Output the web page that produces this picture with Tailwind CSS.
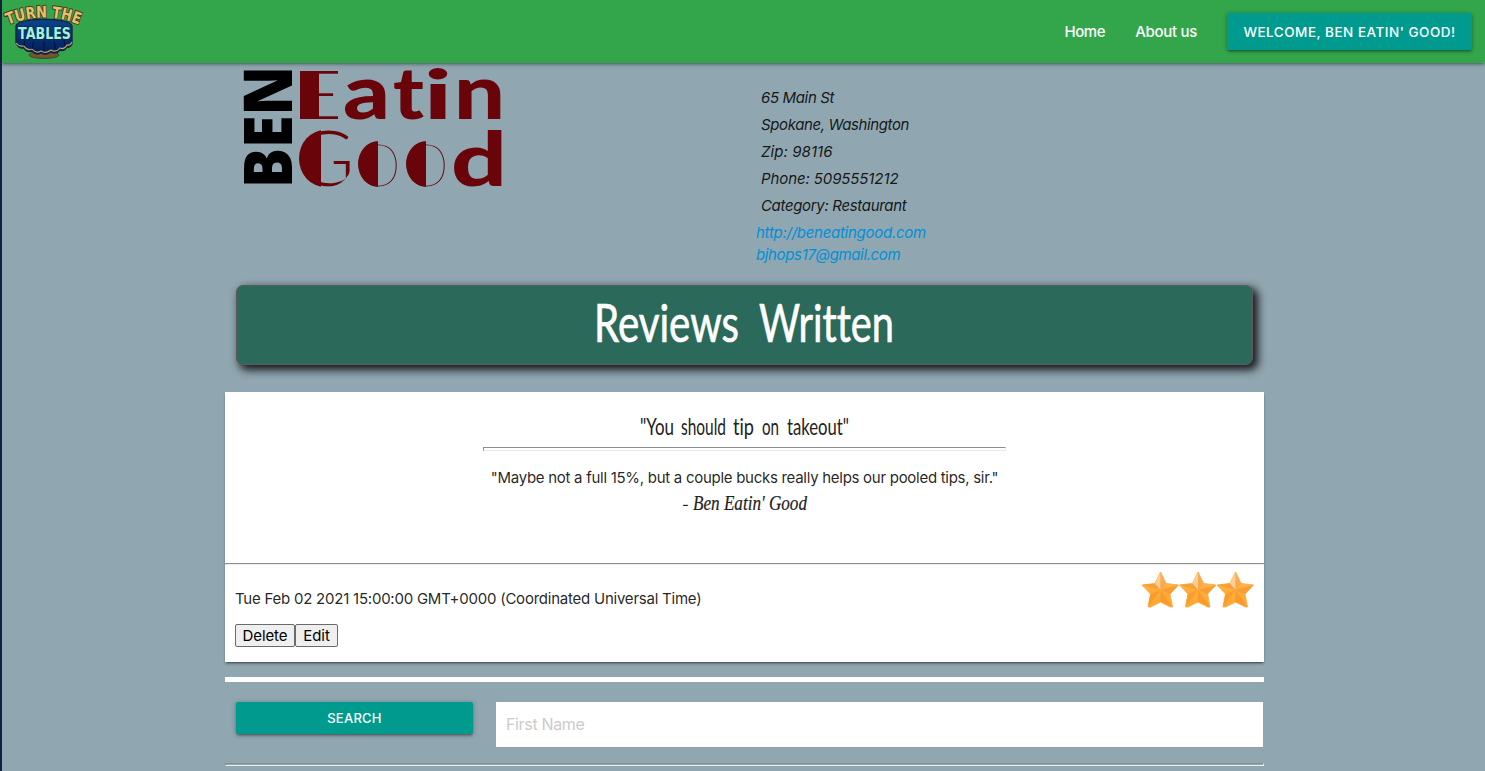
<!DOCTYPE html>
<html lang="en">
<head>
<meta charset="utf-8">
<title>Turn the Tables</title>
<script src="https://cdn.jsdelivr.net/npm/@tailwindcss/browser@4"></script>
</head>
<body class="h-[771px] overflow-hidden border-l-2 border-[#13223c] bg-[#90a6b0] font-['Inter',sans-serif] text-[15px] leading-[22px] text-black/87">
<nav class="relative flex h-[63px] items-center justify-between bg-[#33a64c] pr-[13px] text-white shadow-[0_2px_2px_0_rgba(0,0,0,.14),0_3px_1px_-2px_rgba(0,0,0,.12),0_1px_5px_0_rgba(0,0,0,.2)]">
  <svg class="block h-[63px] w-[84px]" viewBox="2 0 84 63" role="img" aria-label="Turn the Tables">
    <defs>
      <path id="arc" d="M8 25Q44 10 80 25"/>
      <linearGradient id="cloth" x2="0" y2="1"><stop stop-color="#08458d"/><stop offset="1" stop-color="#061c58"/></linearGradient>
    </defs>
    <ellipse cx="44" cy="55" rx="15" ry="3.5" fill="#765432" stroke="#3c4a2c"/>
    <path d="M16 26C17 17 71 17 72 26V44Q70 48 67 47Q64 52 60 50Q56 55 51 52Q46 56 41 53Q36 56 32 51Q27 53 24 48Q19 49 16 43Z" fill="url(#cloth)" stroke="#13263c" stroke-width="1.4"/>
    <path d="M16 43Q19 47 24 46Q27 51 32 49Q36 54 41 51Q46 54 51 50Q56 53 60 48Q64 50 67 45Q70 46 72 42" fill="none" stroke="#b7a16b" stroke-width="1.2"/>
    <path d="M25 40L24 46M34 41L32 49M44 41V51M54 41L56 50M64 40L65 46" stroke="#02103c"/>
    <text font-family="DejaVu Sans" font-weight="700" font-size="16" fill="#e8c268" stroke="#483a26" stroke-width="2" paint-order="stroke"><textPath href="#arc" textLength="73" lengthAdjust="spacingAndGlyphs">TURN THE</textPath></text>
    <text x="18" y="38.500" font-family="DejaVu Sans" font-weight="700" font-size="16" textLength="53" lengthAdjust="spacingAndGlyphs" fill="#a5f0dc" stroke="#0b2946" stroke-width="1.6" paint-order="stroke">TABLES</text>
  </svg>
  <div class="flex items-center">
    <a class="mr-[30px] font-medium tracking-[-.4px]">Home</a>
    <a class="mr-[30px] font-medium tracking-[-.3px]">About us</a>
    <a class="flex h-[37px] w-[245px] items-center justify-center rounded-[2px] bg-[#009b8f] text-[13.500px] font-medium tracking-[.5px] whitespace-nowrap shadow-[0_2px_2px_0_rgba(0,0,0,.14),0_3px_1px_-2px_rgba(0,0,0,.12),0_1px_5px_0_rgba(0,0,0,.3)]">WELCOME, BEN EATIN' GOOD!</a>
  </div>
</nav>

<main class="ml-[223px] w-[1039px]">
  <section class="flex h-[222px] pl-[17px]">
    <svg class="mt-[3px] h-[126px] w-[514px] shrink-0" viewBox="242 66 514 126" font-family="Lato" font-weight="900">
      <defs>
        <!-- Left half of each round letter is inked solid, the right half stays thin -->
        <linearGradient id="inkE" gradientUnits="userSpaceOnUse" x1="319" x2="319.5"><stop stop-color="#69040b"/><stop offset="1" stop-color="#69040b" stop-opacity="0"/></linearGradient>
        <linearGradient id="inkG" gradientUnits="userSpaceOnUse" x1="321" x2="321.5"><stop stop-color="#69040b"/><stop offset="1" stop-color="#69040b" stop-opacity="0"/></linearGradient>
        <linearGradient id="inkO1" gradientUnits="userSpaceOnUse" x1="378" x2="378.5"><stop stop-color="#69040b"/><stop offset="1" stop-color="#69040b" stop-opacity="0"/></linearGradient>
        <linearGradient id="inkO2" gradientUnits="userSpaceOnUse" x1="425.500" x2="426"><stop stop-color="#69040b"/><stop offset="1" stop-color="#69040b" stop-opacity="0"/></linearGradient>
        <clipPath id="clipE"><rect x="300" y="71" width="40" height="48"/></clipPath>
        <clipPath id="clipG"><path d="M325 130A26 28.500 0 0 0 325 187Q351 187 354 155V130Z"/></clipPath>
        <clipPath id="clipO1"><ellipse cx="378.500" cy="164" rx="20.500" ry="23"/></clipPath>
        <clipPath id="clipO2"><ellipse cx="426.500" cy="164" rx="20.500" ry="23"/></clipPath>
      </defs>
      <text transform="translate(292 188) rotate(-90)" font-family="Open Sans" font-weight="800" font-size="67" textLength="122" lengthAdjust="spacingAndGlyphs">BEN</text>
      <g fill="#69040b" font-size="76">
        <g clip-path="url(#clipE)"><text y="119" x="297" font-size="67" font-weight="300" stroke="url(#inkE)" stroke-width="30" textLength="45" lengthAdjust="spacingAndGlyphs">E</text></g>
        <text y="119" x="343" textLength="47" lengthAdjust="spacingAndGlyphs">a</text>
        <text y="119" x="393" font-size="73" textLength="31" lengthAdjust="spacingAndGlyphs">t</text>
        <text y="119" x="424" font-size="69" textLength="28" lengthAdjust="spacingAndGlyphs">i</text>
        <text y="119" x="454" textLength="51" lengthAdjust="spacingAndGlyphs">n</text>
        <g clip-path="url(#clipG)"><text y="186" x="295" font-size="77" font-weight="300" stroke="url(#inkG)" stroke-width="36" textLength="60" lengthAdjust="spacingAndGlyphs">G</text></g>
        <g clip-path="url(#clipO1)"><text y="186" x="355" font-size="85" font-weight="100" stroke="url(#inkO1)" stroke-width="34" textLength="47" lengthAdjust="spacingAndGlyphs">o</text></g>
        <g clip-path="url(#clipO2)"><text y="186" x="403" font-size="85" font-weight="100" stroke="url(#inkO2)" stroke-width="34" textLength="47" lengthAdjust="spacingAndGlyphs">o</text></g>
        <text y="186" x="451" font-size="74" textLength="56" lengthAdjust="spacingAndGlyphs">d</text>
      </g>
    </svg>
    <address class="pt-[24px]">
      <p class="mb-[5px] pl-[5px] tracking-[-.35px]">65 Main St</p>
      <p class="mb-[5px] pl-[5px] tracking-[-.38px]">Spokane, Washington</p>
      <p class="mb-[5px] pl-[5px] tracking-[.08px]">Zip: 98116</p>
      <p class="mb-[5px] pl-[5px] tracking-[-.1px]">Phone: 5095551212</p>
      <p class="mb-[5px] pl-[5px] tracking-[-.33px]">Category: Restaurant</p>
      <a class="block tracking-[-.27px] text-[#0090d9]">http://beneatingood.com</a>
      <a class="block tracking-[-.36px] text-[#0090d9]">bjhops17@gmail.com</a>
    </address>
  </section>

  <h1 class="mx-[11px] flex h-[80px] justify-center rounded-[7px] border border-[#5c5c5c] bg-[#2b695b] shadow-[4px_4px_8px_1px_rgba(0,0,0,.85)]">
    <svg class="h-[78px] w-[300px]" viewBox="594 286 300 78" fill="#fff" stroke="#fff" stroke-width=".7" font-family="Lato" font-size="52" style="font-variant-ligatures:none">
      <text x="593" y="342" textLength="145" lengthAdjust="spacingAndGlyphs">Reviews</text>
      <text x="758" y="342" textLength="135" lengthAdjust="spacingAndGlyphs">Written</text>
    </svg>
  </h1>

  <article class="mt-[27px] h-[270px] bg-white shadow-[0_2px_2px_0_rgba(0,0,0,.14),0_3px_1px_-2px_rgba(0,0,0,.2),0_2px_3px_-1px_rgba(0,0,0,.3)]">
    <div class="flex h-[172px] flex-col items-center border-b border-[#8e8e8e] pt-[18px]">
      <svg class="h-[37px] w-[214px] shrink-0" viewBox="638 410 214 37" fill="#222" font-family="Lato" font-size="23" style="font-variant-ligatures:none">
        <text x="640" y="435" textLength="34" lengthAdjust="spacingAndGlyphs">"You</text>
        <text x="681" y="435" textLength="45" lengthAdjust="spacingAndGlyphs">should</text>
        <text x="733" y="435" textLength="21" lengthAdjust="spacingAndGlyphs">tip</text>
        <text x="762" y="435" textLength="17" lengthAdjust="spacingAndGlyphs">on</text>
        <text x="787" y="435" textLength="62" lengthAdjust="spacingAndGlyphs">takeout"</text>
      </svg>
      <div class="h-[4px] w-[523px] shrink-0 border border-t-[#8e8e8e] border-r-[#e9e9e9] border-b-[#e9e9e9] border-l-[#8e8e8e]"></div>
      <p class="mt-[16px] tracking-[-.28px]">"Maybe not a full 15%, but a couple bucks really helps our pooled tips, sir."</p>
      <svg class="h-[28px] w-[130px] shrink-0" viewBox="680 489 130 28" fill="#222" font-family="Liberation Serif" font-style="italic" font-size="21">
        <text x="682" y="510" font-family="Inter" font-style="normal" font-size="15">-</text>
        <text x="693" y="510" textLength="114" lengthAdjust="spacingAndGlyphs" stroke="#222" stroke-width=".2">Ben Eatin' Good</text>
      </svg>
    </div>
    <div class="flex justify-between border-t border-[#ededed] px-[10px]">
      <div class="pt-[23px]">
        <p class="tracking-[-.23px]">Tue Feb 02 2021 15:00:00 GMT+0000 (Coordinated Universal Time)</p>
        <div class="mt-[14px] flex text-black">
          <button class="h-[23px] w-[60px] rounded-[2px] border border-[#6b6b6b] bg-[#efefef] leading-[20px] tracking-[-.1px]">Delete</button>
          <button class="h-[23px] w-[43px] rounded-[2px] border border-[#6b6b6b] bg-[#efefef] leading-[20px]">Edit</button>
        </div>
      </div>
      <svg class="mt-[6px] h-[38px] w-[113px] overflow-visible" viewBox="-0.5 0 113 38">
        <defs>
          <linearGradient id="gold" x2="0" y2="1"><stop stop-color="#ffc080"/><stop offset=".5" stop-color="#ffae3c"/><stop offset="1" stop-color="#ffa72d"/></linearGradient>
          <g id="star">
            <path d="M19 1L24.500 12.500L37 14L28.500 23L31 36H29L19 31L9 36H6.500L9 23L0.500 14L13.500 12.500Z" fill="url(#gold)" stroke="#ffb144" stroke-width="1" stroke-linejoin="round"/>
            <path d="M37 14L28.500 23L19 19Z M31 36L19 31V19Z M6.500 36L9 23L19 19Z M0.500 14L13.500 12.500L19 19Z" fill="#f5912b" opacity=".6"/>
            <path d="M19 1V19L13.500 12.500Z" fill="#ffd3a6" opacity=".8"/>
            <path d="M19 1L24.500 12.500L19 19Z" fill="#fba24c" opacity=".7"/>
          </g>
        </defs>
        <use href="#star"/><use href="#star" x="37.500"/><use href="#star" x="75"/>
      </svg>
    </div>
  </article>

  <div class="mt-[15px] h-[5px] bg-white"></div>

  <form class="mt-[20px] flex items-start pr-px pl-[11px]">
    <button type="button" class="h-[32px] w-[237px] rounded-[2px] bg-[#009b8f] text-[13px] font-medium tracking-[.25px] text-white shadow-[0_2px_2px_0_rgba(0,0,0,.14),0_3px_1px_-2px_rgba(0,0,0,.12),0_1px_5px_0_rgba(0,0,0,.3)]">SEARCH</button>
    <input class="ml-[23px] h-[46px] w-[767px] border-b border-[#9e9e9e] bg-white px-[10px] pb-[2px] text-[16px] tracking-[-.35px] placeholder:text-[#cbcbcb]" placeholder="First Name">
  </form>
  <div class="mt-[15px] h-[3px] border border-t-[#8e8e8e] border-r-[#eee] border-b-[#eee] border-l-[#8e8e8e]"></div>
</main>
</body>
</html>
